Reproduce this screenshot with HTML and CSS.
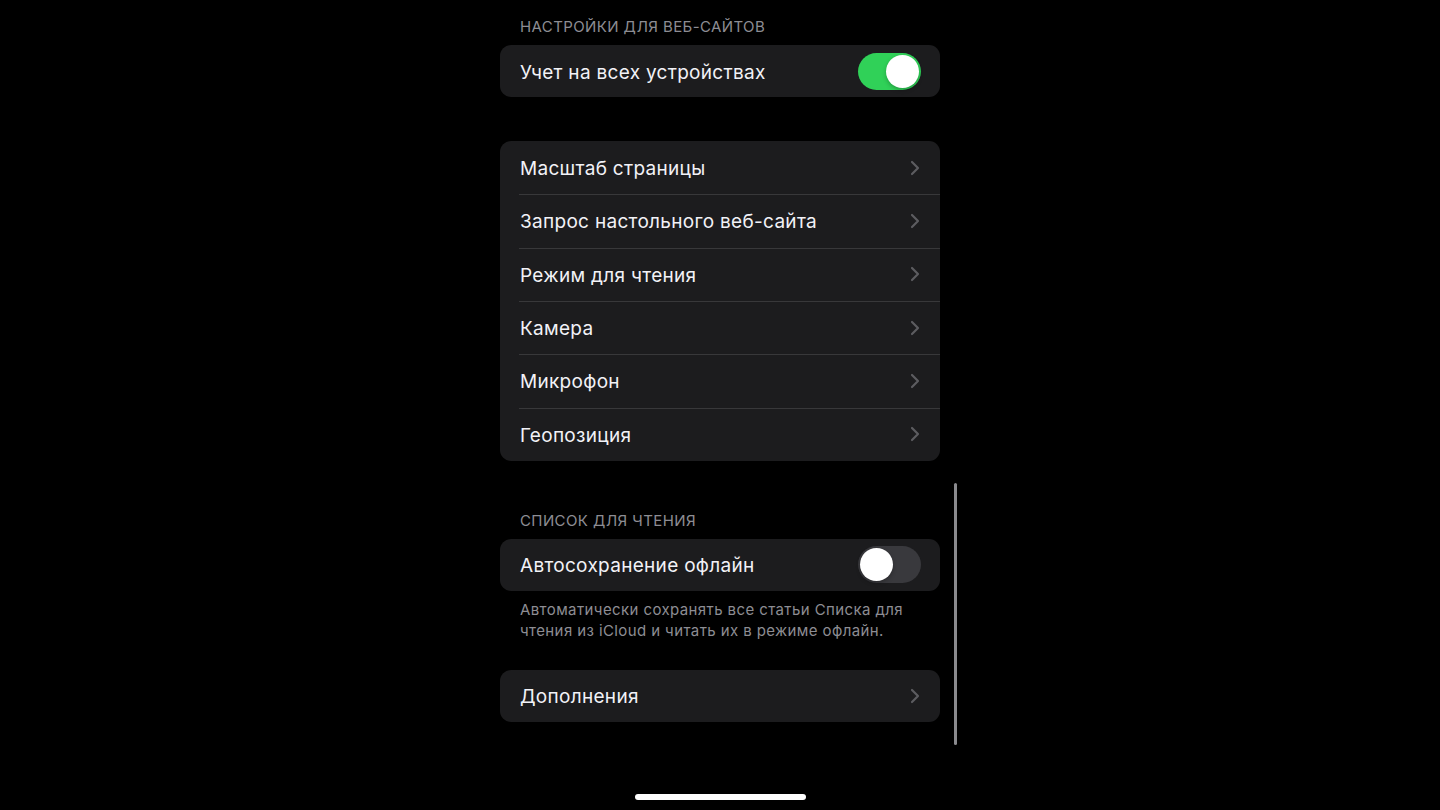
FILE: index.html
```html
<!DOCTYPE html>
<html lang="ru">
<head>
<meta charset="utf-8">
<title>Safari</title>
<link rel="stylesheet" href="styles.css">
</head>
<body>
<div class="screen">
  <div class="content">
    <div class="section-header">Настройки для веб-сайтов</div>
    <div class="card">
      <div class="row">
        <span class="label">Учет на всех устройствах</span>
        <span class="toggle on"><span class="knob"></span></span>
      </div>
    </div>

    <div class="card card-gap">
      <div class="row"><span class="label">Масштаб страницы</span><svg class="chev" viewBox="0 0 10 16"><path d="M2 2 L8 8 L2 14"/></svg></div>
      <div class="row"><span class="label">Запрос настольного веб-сайта</span><svg class="chev" viewBox="0 0 10 16"><path d="M2 2 L8 8 L2 14"/></svg></div>
      <div class="row"><span class="label">Режим для чтения</span><svg class="chev" viewBox="0 0 10 16"><path d="M2 2 L8 8 L2 14"/></svg></div>
      <div class="row"><span class="label">Камера</span><svg class="chev" viewBox="0 0 10 16"><path d="M2 2 L8 8 L2 14"/></svg></div>
      <div class="row"><span class="label">Микрофон</span><svg class="chev" viewBox="0 0 10 16"><path d="M2 2 L8 8 L2 14"/></svg></div>
      <div class="row"><span class="label">Геопозиция</span><svg class="chev" viewBox="0 0 10 16"><path d="M2 2 L8 8 L2 14"/></svg></div>
    </div>

    <div class="section-header header-gap">Список для чтения</div>
    <div class="card">
      <div class="row">
        <span class="label">Автосохранение офлайн</span>
        <span class="toggle off"><span class="knob"></span></span>
      </div>
    </div>
    <div class="footer">Автоматически сохранять все статьи Списка для<br>чтения из iCloud и читать их в режиме офлайн.</div>

    <div class="card card-gap2">
      <div class="row"><span class="label">Дополнения</span><svg class="chev" viewBox="0 0 10 16"><path d="M2 2 L8 8 L2 14"/></svg></div>
    </div>
  </div>
  <div class="scrollbar"></div>
  <div class="home"></div>
</div>
</body>
</html>
```
FILE: styles.css
```css
* { box-sizing: border-box; }
html, body { margin: 0; padding: 0; background: #000; }
body {
  font-family: Inter, "Noto Sans", sans-serif;
  color: #fff;
  -webkit-font-smoothing: antialiased;
}
.screen {
  position: relative;
  width: 1440px;
  height: 810px;
  overflow: hidden;
  background: #000;
}
.content {
  width: 440px;
  margin: 0 auto;
  padding-top: 17px;
}
.section-header {
  padding-left: 20px;
  font-size: 15px;
  line-height: 20px;
  text-transform: uppercase;
  color: #8d8d93;
  margin-bottom: 8px;
  letter-spacing: 0.4px;
}
.header-gap { margin-top: 50px; }
.card {
  background: #1c1c1e;
  border-radius: 11px;
  overflow: hidden;
}
.card-gap { margin-top: 44px; }
.card-gap2 { margin-top: 29px; }
.row {
  height: 53.33px;
  display: flex;
  align-items: center;
  justify-content: space-between;
  padding: 0 19px 0 20px;
  position: relative;
}
.card > .row:only-child { height: 52px; }
.row + .row::before {
  content: "";
  position: absolute;
  top: 0;
  left: 19px;
  right: 0;
  height: 1px;
  background: #38383a;
}
.label {
  font-size: 19px;
  letter-spacing: 0.3px;
  color: #f2f2f7;
  padding-top: 2px;
}
.chev {
  width: 10px;
  height: 16px;
  margin-right: 1px;
}
.chev path {
  fill: none;
  stroke: #5c5c60;
  stroke-width: 2.2;
  stroke-linecap: round;
  stroke-linejoin: round;
}
.toggle {
  width: 63px;
  height: 37px;
  border-radius: 19px;
  position: relative;
  display: block;
}
.toggle.on { background: #30d158; }
.toggle.off { background: #39393d; }
.knob {
  position: absolute;
  top: 2px;
  width: 33px;
  height: 33px;
  border-radius: 50%;
  background: #fff;
  box-shadow: 0 2px 4px rgba(0,0,0,0.25);
}
.toggle.on .knob { right: 2px; }
.toggle.off .knob { left: 2px; }
.footer {
  padding: 0 20px;
  margin-top: 8px;
  font-size: 15px;
  line-height: 21px;
  color: #8d8d93;
  letter-spacing: 0.4px;
}
.scrollbar {
  position: absolute;
  left: 954px;
  top: 483px;
  width: 3px;
  height: 262px;
  border-radius: 2px;
  background: #8a8a8e;
}
.home {
  position: absolute;
  left: 635px;
  top: 794px;
  width: 171px;
  height: 6px;
  border-radius: 3px;
  background: #fff;
}
```
